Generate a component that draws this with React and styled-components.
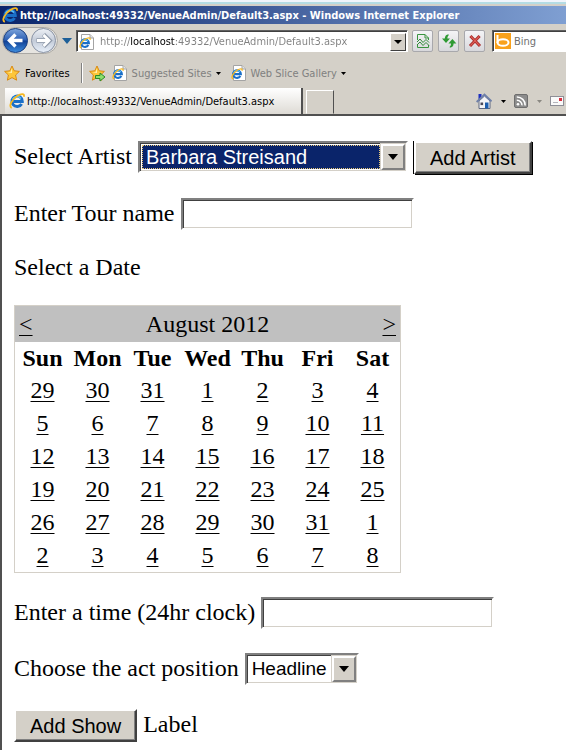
import React, { useState } from 'react'
import styled, { createGlobalStyle } from 'styled-components'

const PAGE_URL = 'http://localhost:49332/VenueAdmin/Default3.aspx'

const DAYS = ['Sun', 'Mon', 'Tue', 'Wed', 'Thu', 'Fri', 'Sat']

const WEEKS = [
  [29, 30, 31, 1, 2, 3, 4],
  [5, 6, 7, 8, 9, 10, 11],
  [12, 13, 14, 15, 16, 17, 18],
  [19, 20, 21, 22, 23, 24, 25],
  [26, 27, 28, 29, 30, 31, 1],
  [2, 3, 4, 5, 6, 7, 8],
]

// ---- icons ----

const IeMark = () => (
  <>
    <path
      d='M12.6 10.9A5.2 5.2 0 1 1 13.3 8.4H4.6'
      fill='none'
      stroke='#1a6fc8'
      strokeWidth='3'
    />
    <path
      d='M3.6 6.4A5 5 0 0 1 12 5.4'
      fill='none'
      stroke='#5cc0f6'
      strokeWidth='1.6'
    />
    <path
      d='M2.8 14.8C-1 13.4 3.2 6.4 8.2 3C12 .5 16 .2 14.8 3.8'
      fill='none'
      stroke='#f6b820'
      strokeWidth='1.8'
    />
  </>
)

const IeIcon = ({ size = 16 }) => (
  <svg width={size} height={size} viewBox='0 0 16 16' aria-hidden='true'>
    <IeMark />
  </svg>
)

const PageIcon = () => (
  <svg width='16' height='16' viewBox='0 0 16 16' aria-hidden='true'>
    <path d='M2.5 .5H11L14.5 4V15.5H2.5Z' fill='#fff' stroke='#a4a4a4' />
    <path d='M11 .5V4H14.5' fill='#e4e4e4' stroke='#a4a4a4' />
    <g transform='translate(0 3) scale(.74)'>
      <IeMark />
    </g>
  </svg>
)

const NavArrows = () => (
  <svg width='56' height='28' viewBox='0 0 56 28' aria-hidden='true'>
    <defs>
      <linearGradient id='back' x1='0' y1='0' x2='0' y2='1'>
        <stop offset='0' stopColor='#7fa6dc' />
        <stop offset='.48' stopColor='#2c5fb4' />
        <stop offset='.52' stopColor='#0f3f94' />
        <stop offset='1' stopColor='#3f8fe0' />
      </linearGradient>
      <linearGradient id='forward' x1='0' y1='0' x2='0' y2='1'>
        <stop offset='0' stopColor='#eef1f6' />
        <stop offset='.5' stopColor='#c3cbd8' />
        <stop offset='1' stopColor='#e8f0fa' />
      </linearGradient>
    </defs>
    <rect x='.5' y='.5' width='55' height='26' rx='13' fill='#e6e4e0' stroke='#aaa8a4' />
    <circle cx='13.5' cy='13.5' r='12' fill='url(#back)' stroke='#1b3f80' />
    <circle cx='41.5' cy='13.5' r='12' fill='url(#forward)' stroke='#8892a4' />
    <path d='M20.5 13.5H8M13.5 7.5L7.5 13.5L13.5 19.5' fill='none' stroke='#fff' strokeWidth='3.4' />
    <path d='M34.5 13.5H47M41.5 7.5L47.5 13.5L41.5 19.5' fill='none' stroke='#8d98a8' strokeWidth='4.4' />
    <path d='M35 13.5H47M41.5 8L47 13.5L41.5 19' fill='none' stroke='#fff' strokeWidth='2.8' />
  </svg>
)

const Star = ({ add }) => (
  <svg width='17' height='17' viewBox='0 0 17 17' aria-hidden='true'>
    <path
      d='M8 1L10.2 5.8L15.4 6.4L11.6 10L12.6 15.2L8 12.6L3.4 15.2L4.4 10L.6 6.4L5.8 5.8Z'
      fill='#fdc63a'
      stroke='#d98a14'
    />
    <path d='M8 3L6.6 7L3.4 7.4L8 8Z' fill='#fff0b0' />
    {add && (
      <path
        d='M6.5 10.5H11V8L16 12L11 16V13.5H6.5Z'
        fill='#8ee06c'
        stroke='#2c8a2a'
      />
    )}
  </svg>
)

const Caret = ({ color = '#000', wide }) => (
  <svg
    width={wide ? 8 : 5}
    height={wide ? 4 : 3}
    viewBox={wide ? '0 0 8 4' : '0 0 5 3'}
    aria-hidden='true'
  >
    <path d={wide ? 'M0 0H8L4 4Z' : 'M0 0H5L2.5 3Z'} fill={color} />
  </svg>
)

const BigCaret = ({ color = '#000' }) => (
  <svg width='10' height='6' viewBox='0 0 10 6' aria-hidden='true'>
    <path d='M0 0H10L5 6Z' fill={color} />
  </svg>
)

const CompatIcon = () => (
  <svg width='16' height='16' viewBox='0 0 16 16' fill='none' aria-hidden='true'>
    <path d='M2.5 7V1.5H10L13.5 5V7M10 1.5V5H13.5M2.5 11.5V14.5H13.5V12' stroke='#3a9440' />
    <path d='M2 9L5 6L8 9.5L11 6.5L14 9.5' stroke='#2e8a36' />
    <path d='M2 12L5 9L8 12.5L11 9.5L14 12.5' stroke='#2e8a36' />
  </svg>
)

const RefreshIcon = () => (
  <svg width='16' height='16' viewBox='0 0 16 16' fill='#2f9a34' aria-hidden='true'>
    <path d='M7.6 1.2C5.2 1.6 3.8 3 3.8 5.5H1L5 10L9 5.5H6.4C6.4 4 6.8 3 7.6 2.4Z' />
    <path d='M8.8 14.8C11.2 14.4 12.6 13 12.6 10.5H15.4L11.4 6L7.4 10.5H10C10 12 9.6 13 8.8 13.6Z' />
  </svg>
)

const StopIcon = () => (
  <svg width='16' height='16' viewBox='0 0 16 16' aria-hidden='true'>
    <path d='M3.4 3L13 13M12.6 3L3 13' stroke='#a82a2a' strokeWidth='3' />
    <path d='M3.8 3.4L12.6 12.6M12.2 3.4L3.4 12.6' stroke='#e06058' strokeWidth='1.2' />
  </svg>
)

const BingIcon = () => (
  <svg width='16' height='16' viewBox='0 0 16 16' aria-hidden='true'>
    <rect width='16' height='16' fill='#f9a11b' />
    <path d='M2.5 2V10' stroke='#fff' strokeWidth='2' />
    <ellipse cx='8' cy='9.5' rx='5.5' ry='3.3' fill='none' stroke='#fff' strokeWidth='2' />
  </svg>
)

const HomeIcon = () => (
  <svg width='16' height='16' viewBox='0 0 16 16' aria-hidden='true'>
    <path d='M2.5 1H5.5V5L2.5 7Z' fill='#1c2fc0' />
    <path d='M3 8L8.5 3L14 8V15.5H3Z' fill='#f4f4f8' stroke='#5c6680' />
    <path d='M.6 9L8.5 1.6L15.6 8.4' fill='none' stroke='#6f80a8' strokeWidth='2' />
    <rect x='9' y='9.5' width='3.5' height='6' fill='#1d5fb0' />
    <rect x='4.5' y='9.5' width='2.6' height='2.6' fill='#4a4a5a' />
  </svg>
)

const FeedIcon = () => (
  <svg width='14' height='14' viewBox='0 0 14 14' fill='none' aria-hidden='true'>
    <rect x='.5' y='.5' width='13' height='13' rx='1.5' fill='#8c8c8c' stroke='#6e6e6e' />
    <circle cx='4' cy='10.2' r='1.3' fill='#fff' />
    <path d='M2.8 6.2A5 5 0 0 1 8 11.4M2.8 3A8.2 8.2 0 0 1 11.2 11.4' stroke='#fff' strokeWidth='1.5' />
  </svg>
)

const MailIcon = () => (
  <svg width='14' height='10' viewBox='0 0 14 10' aria-hidden='true'>
    <rect x='.5' y='.5' width='13' height='9' fill='#fafafa' stroke='#8e8e96' />
    <rect x='9' y='2' width='3' height='3' fill='#d83040' />
    <path d='M3 6.5H8' stroke='#b4b4bc' />
  </svg>
)

// ---- page ----

export default function App() {
  const [url, setUrl] = useState(PAGE_URL)
  const [artist, setArtist] = useState('Barbara Streisand')
  const [tour, setTour] = useState('')
  const [time, setTime] = useState('')
  const [position, setPosition] = useState('Headline')

  return (
    <>
      <GlobalStyle />
      <Window>
        <TopEdge />
        <TitleBar>
          <IeIcon />
          <span>{PAGE_URL} - Windows Internet Explorer</span>
        </TitleBar>

        <NavBar>
          <NavArrows />
          <NavCaret>
            <BigCaret color='#1d5f98' />
          </NavCaret>
          <AddressBox>
            <PageIcon />
            <AddressInput
              aria-label='Address'
              value={url}
              onChange={(e) => setUrl(e.target.value)}
            />
            <DropButton aria-label='Show addresses'>
              <Caret wide />
            </DropButton>
          </AddressBox>
          <Tools>
            <ToolButton aria-label='Compatibility view'>
              <CompatIcon />
            </ToolButton>
            <ToolButton aria-label='Refresh'>
              <RefreshIcon />
            </ToolButton>
            <ToolButton aria-label='Stop'>
              <StopIcon />
            </ToolButton>
          </Tools>
          <SearchBox>
            <BingIcon />
            <SearchInput aria-label='Search' placeholder='Bing' />
          </SearchBox>
        </NavBar>

        <FavoritesBar>
          <BarButton>
            <Star />
            Favorites
          </BarButton>
          <Divider />
          <BarButton aria-label='Add to Favorites Bar'>
            <Star add />
          </BarButton>
          <BarButton $muted>
            <PageIcon />
            Suggested Sites
            <Caret />
          </BarButton>
          <BarButton $muted>
            <PageIcon />
            Web Slice Gallery
            <Caret />
          </BarButton>
        </FavoritesBar>

        <TabBar>
          <Tab>
            <IeIcon />
            <span>{PAGE_URL}</span>
          </Tab>
          <NewTab aria-label='New Tab' />
          <Commands>
            <CommandButton aria-label='Home'>
              <HomeIcon />
              <Caret />
            </CommandButton>
            <CommandButton aria-label='Feeds'>
              <FeedIcon />
              <Caret color='#8a8882' />
            </CommandButton>
            <CommandButton aria-label='Read mail'>
              <MailIcon />
            </CommandButton>
          </Commands>
        </TabBar>

        <Page onSubmit={(e) => e.preventDefault()}>
          <Row>
            <label htmlFor='artist'>Select Artist</label>
            <SelectBox $width={270}>
              <Select
                id='artist'
                $active
                value={artist}
                onChange={(e) => setArtist(e.target.value)}
              >
                <option>Barbara Streisand</option>
              </Select>
              <SelectArrow>
                <BigCaret />
              </SelectArrow>
            </SelectBox>
            <Button $primary>Add Artist</Button>
          </Row>

          <Row>
            <label htmlFor='tour'>Enter Tour name</label>
            <TextInput
              id='tour'
              value={tour}
              onChange={(e) => setTour(e.target.value)}
            />
          </Row>

          <div>Select a Date</div>

          <Calendar>
            <thead>
              <tr>
                <MonthCell colSpan={7}>
                  <Month>
                    <a href='#prev'>&lt;</a>
                    <span>August 2012</span>
                    <a href='#next'>&gt;</a>
                  </Month>
                </MonthCell>
              </tr>
              <tr>
                {DAYS.map((day) => (
                  <DayName key={day} scope='col'>
                    {day}
                  </DayName>
                ))}
              </tr>
            </thead>
            <tbody>
              {WEEKS.map((week, index) => (
                <tr key={index}>
                  {week.map((day) => (
                    <Day key={day}>
                      <a href={`#${index}-${day}`}>{day}</a>
                    </Day>
                  ))}
                </tr>
              ))}
            </tbody>
          </Calendar>

          <Row>
            <label htmlFor='time'>Enter a time (24hr clock)</label>
            <TextInput
              id='time'
              value={time}
              onChange={(e) => setTime(e.target.value)}
            />
          </Row>

          <Row>
            <label htmlFor='position'>Choose the act position</label>
            <SelectBox $width={114}>
              <Select
                id='position'
                value={position}
                onChange={(e) => setPosition(e.target.value)}
              >
                <option>Headline</option>
              </Select>
              <SelectArrow>
                <BigCaret />
              </SelectArrow>
            </SelectBox>
          </Row>

          <Row>
            <Button>Add Show</Button>
            <span>Label</span>
          </Row>
        </Page>
      </Window>
    </>
  )
}

const GlobalStyle = createGlobalStyle`
  *, *::before, *::after {
    box-sizing: border-box;
  }
  body {
    margin: 0;
    background: #fff;
  }
  svg {
    display: block;
    flex: none;
  }
  button, input, select {
    margin: 0;
    padding: 0;
    border: 0;
    border-radius: 0;
    background: none;
    color: inherit;
    font: inherit;
  }
`

const Window = styled.div`
  min-height: 100vh;
  display: flex;
  flex-direction: column;
  overflow: hidden;
  background: #d4d0c8;
  color: #000;
  font-family: 'DejaVu Sans Condensed', 'Noto Sans', sans-serif;
  font-size: 11px;
  white-space: nowrap;
`

const TopEdge = styled.div`
  height: 6px;
  flex: none;
  border-bottom: 2px solid #d4d0c8;
  background: linear-gradient(#f0f4fb 2px, #b4dce4 2px);
`

const TitleBar = styled.header`
  height: 18px;
  flex: none;
  display: flex;
  align-items: center;
  gap: 2px;
  padding-left: 2px;
  background: linear-gradient(90deg, #0a246a, #7f9fd2);
  color: #fff;
  font-weight: bold;
`

const NavBar = styled.div`
  height: 34px;
  flex: none;
  display: flex;
  align-items: center;
  gap: 4px;
  padding-left: 2px;
`

const NavCaret = styled.span`
  width: 10px;
`

const Field = styled.div`
  height: 22px;
  display: flex;
  align-items: center;
  background: #fff;
  border: 1px solid;
  border-color: #606060 #fff #fff #606060;
  box-shadow: inset 1px 1px #404040;
`

const AddressBox = styled(Field)`
  flex: 1;
  min-width: 0;
  gap: 5px;
  padding: 2px 1px 1px 2px;
`

/* the host name stays black, the rest of the address is grey */
const AddressInput = styled.input`
  flex: 1;
  min-width: 0;
  color: #808080;
  background: linear-gradient(
    90deg,
    #808080 31px,
    #000 31px,
    #000 75px,
    #808080 75px
  );
  background-clip: text;
  -webkit-text-fill-color: transparent;
  outline: 0;
`

const DropButton = styled.button`
  width: 16px;
  height: 18px;
  display: grid;
  place-items: center;
  background: #d4d0c8;
  border: 1px solid;
  border-color: #fff #404040 #404040 #fff;
`

const Tools = styled.div`
  flex: none;
  display: flex;
  gap: 5px;
  padding-right: 3px;
`

const ToolButton = styled.button`
  width: 21px;
  height: 22px;
  display: grid;
  place-items: center;
  border: 1px solid #a8a8ac;
  border-radius: 2px;
  background: linear-gradient(#f4f4f6, #d8d8dc);
`

const SearchBox = styled(Field)`
  width: 74px;
  flex: none;
  gap: 3px;
  padding-left: 2px;
  border-right: 0;
`

const SearchInput = styled.input`
  width: 50px;
  outline: 0;
  &::placeholder {
    color: #707070;
    opacity: 1;
  }
`

const FavoritesBar = styled.div`
  height: 30px;
  flex: none;
  display: flex;
  align-items: center;
  gap: 6px;
  padding-left: 4px;
`

const BarButton = styled.button`
  display: flex;
  align-items: center;
  gap: 4px;
  padding-right: ${({ $muted }) => ($muted ? 4 : 0)}px;
  color: ${({ $muted }) => ($muted ? '#808080' : '#000')};
`

const Divider = styled.span`
  width: 2px;
  height: 20px;
  margin-left: 5px;
  border-left: 1px solid #808080;
  border-right: 1px solid #fff;
`

const TabBar = styled.div`
  height: 28px;
  flex: none;
  display: flex;
  align-items: flex-end;
  gap: 3px;
  padding-left: 5px;
  border-bottom: 2px solid #505050;
`

const Tab = styled.button`
  width: 298px;
  height: 26px;
  display: flex;
  align-items: center;
  gap: 2px;
  padding-left: 4px;
  background: linear-gradient(#fff, #dedbd5);
  border-right: 2px solid #505050;
`

const NewTab = styled.button`
  width: 28px;
  height: 24px;
  border: 1px solid;
  border-color: #fff #505050 transparent #fff;
`

const Commands = styled.div`
  height: 26px;
  margin-left: auto;
  padding-right: 2px;
  display: flex;
  align-items: center;
  gap: 8px;
`

const CommandButton = styled.button`
  display: flex;
  align-items: center;
  gap: 9px;
`

const Page = styled.form`
  flex: 1;
  display: flex;
  flex-direction: column;
  align-items: flex-start;
  gap: 24px;
  padding: 25px 12px 6px;
  border-left: 2px solid #505050;
  background: #fff;
  font-family: 'Liberation Serif', 'Times New Roman', serif;
  font-size: 24px;
  line-height: 27px;
`

const Row = styled.div`
  display: flex;
  align-items: flex-start;
  gap: 6px;
  line-height: 30px;
`

const Inset = `
  height: 32px;
  background: #fff;
  border: 2px solid;
  border-color: #808080 #fff #fff #808080;
  box-shadow: inset 1px 1px #404040, inset -1px -1px #d4d0c8;
  font-family: 'Liberation Sans', Arial, sans-serif;
  font-size: 20px;
`

const TextInput = styled.input`
  ${Inset}
  width: 233px;
  padding: 0 4px;
  outline: 0;
`

const SelectBox = styled.div`
  ${Inset}
  width: ${({ $width }) => $width}px;
  display: flex;
  padding: 1px;
`

const Select = styled.select`
  appearance: none;
  flex: 1;
  min-width: 0;
  margin: 1px;
  padding: 0 3px;
  outline: 0;
  border: ${({ $active }) => ($active ? '1px dotted #e8c878' : '0')};
  background: ${({ $active }) => ($active ? '#0a246a' : '#fff')};
  color: ${({ $active }) => ($active ? '#fff' : '#000')};
  font-size: ${({ $active }) => ($active ? 20 : 19)}px;
  line-height: 22px;
`

const SelectArrow = styled.span`
  width: 24px;
  flex: none;
  display: grid;
  place-items: center;
  background: #d4d0c8;
  border: 2px solid;
  border-color: #fff #808080 #808080 #fff;
  box-shadow: 0 0 0 1px #d4d0c8, 1px 1px #404040;
  pointer-events: none;
`

const Button = styled.button`
  height: 33px;
  padding: 0 14px;
  background: #d4d0c8;
  border: 2px solid;
  border-color: #fff #404040 #404040 #fff;
  box-shadow: inset -1px -1px #808080
    ${({ $primary }) => $primary && ', -1px 0 #000, 1px 1px #000'};
  font-family: 'Liberation Sans', Arial, sans-serif;
  font-size: 20px;
  line-height: 28px;
`

const Calendar = styled.table`
  width: 387px;
  table-layout: fixed;
  border: 1px solid #d4d0c8;
  border-spacing: 0;
  text-align: center;
  a {
    color: #000;
    text-decoration-thickness: 1px;
    text-decoration-skip-ink: none;
    text-underline-offset: 3px;
  }
`

const MonthCell = styled.th`
  height: 36px;
  padding: 0 4px;
  background: #c0c0c0;
  font-weight: normal;
`

const Month = styled.div`
  display: flex;
  justify-content: space-between;
`

const DayName = styled.th`
  height: 32px;
  padding: 0;
`

const Day = styled.td`
  height: 33px;
  padding: 0;
`
